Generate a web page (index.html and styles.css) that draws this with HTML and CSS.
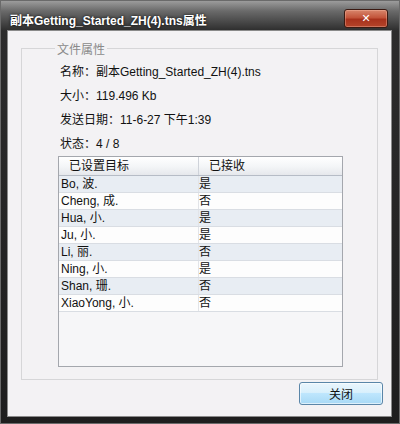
FILE: index.html
```html
<!DOCTYPE html>
<html lang="zh">
<head>
<meta charset="UTF-8">
<title>文件属性</title>
<link rel="stylesheet" href="styles.css">
</head>
<body>
<div class="window">
    <div class="titlebar">
        <span class="title">副本Getting_Started_ZH(4).tns属性</span>
        <button class="close-x">✕</button>
    </div>
    <div class="panel">
        <fieldset class="group">
            <legend>文件属性</legend>
            <div class="info">
                <div class="line">名称：副本Getting_Started_ZH(4).tns</div>
                <div class="line">大小：119.496 Kb</div>
                <div class="line">发送日期：11-6-27 下午1:39</div>
                <div class="line">状态：4 / 8</div>
            </div>
            <div class="table">
                <div class="head">
                    <div class="hcell first">已设置目标</div>
                    <div class="hcell">已接收</div>
                </div>
                <div class="row odd"><span class="name">Bo, 波.</span><span>是</span></div>
                <div class="row"><span class="name">Cheng, 成.</span><span>否</span></div>
                <div class="row odd"><span class="name">Hua, 小.</span><span>是</span></div>
                <div class="row"><span class="name">Ju, 小.</span><span>是</span></div>
                <div class="row odd"><span class="name">Li, 丽.</span><span>否</span></div>
                <div class="row"><span class="name">Ning, 小.</span><span>是</span></div>
                <div class="row odd"><span class="name">Shan, 珊.</span><span>否</span></div>
                <div class="row"><span class="name">XiaoYong, 小.</span><span>否</span></div>
            </div>
        </fieldset>
        <div class="actions">
            <button class="btn">关闭</button>
        </div>
    </div>
</div>
</body>
</html>
```
FILE: styles.css
```css
html, body {
    margin: 0;
    padding: 0;
}
body {
    width: 400px;
    height: 424px;
    font-family: "Liberation Sans", "Noto Sans CJK SC", sans-serif;
    font-size: 12px;
    color: #111;
}
.window {
    width: 400px;
    height: 424px;
    box-sizing: border-box;
    display: flex;
    flex-direction: column;
    background: linear-gradient(to bottom, #9c9c9c 0px, #6a6a6a 10px, #2c2c2c 30px, #1e1e1e 100%);
    border: 1px solid #6a6a6a;
}
.titlebar {
    height: 29px;
    display: flex;
    align-items: center;
    justify-content: space-between;
    padding: 0 11px 0 9px;
}
.title {
    color: #fff;
    font-size: 12px;
    font-weight: bold;
    margin-top: 8px;
    text-shadow: 0 0 3px #000;
}
.close-x {
    width: 44px;
    height: 19px;
    margin-top: 5px;
    border: 1px solid #3a1a12;
    border-radius: 3px;
    background: linear-gradient(to bottom, #d8866c 0%, #c2543a 45%, #a8321c 55%, #b4442a 100%);
    color: #fff;
    font-size: 11px;
    font-weight: bold;
    font-family: "DejaVu Sans", sans-serif;
    padding: 0;
    line-height: 17px;
    box-shadow: inset 0 0 0 1px rgba(255,200,180,0.35);
}
.panel {
    flex: 1;
    margin: 0 7px 6px 6px;
    background: #f3f2f4;
    border: 1px solid #8a8a8a;
    display: flex;
    flex-direction: column;
    padding: 9px 8px 11px 13px;
}
.group {
    margin: 0 5px 0 0;
    padding: 8px 34px 12px 36px;
    border: 1px solid #d6d6d8;
    height: 340px;
    box-sizing: border-box;
}
.group legend {
    color: #8a8a8a;
    padding: 0 2px;
    margin-left: -3px;
    font-size: 12px;
}
.info {
    display: flex;
    flex-direction: column;
    gap: 9px;
    padding-left: 2px;
}
.line {
    height: 15px;
    line-height: 15px;
}
.table {
    margin-top: 4px;
    height: 211px;
    box-sizing: border-box;
    border: 1px solid #a4a7ad;
    background: #f6f6f8;
}
.head {
    display: flex;
    height: 18px;
    background: linear-gradient(to bottom, #ffffff 0%, #f4f6f8 50%, #e6e8ec 100%);
    border-bottom: 1px solid #b6bcc6;
}
.hcell {
    line-height: 18px;
    padding-left: 10px;
    flex: 1;
}
.hcell.first {
    flex: 0 0 129px;
    border-right: 1px solid #cfd3da;
}
.row {
    display: flex;
    height: 16px;
    line-height: 16px;
    border-bottom: 1px solid #d9dde3;
    background: #fdfdfd;
}
.row.odd {
    background: #e8edf3;
}
.row .name {
    flex: 0 0 137px;
    padding-left: 2px;
    border-right: 1px solid #e2e4e8;
}
.actions {
    display: flex;
    justify-content: flex-end;
    margin-top: auto;
}
.btn {
    width: 84px;
    height: 23px;
    font-family: "Liberation Sans", "Noto Sans CJK SC", sans-serif;
    font-size: 12px;
    color: #111;
    border: 1px solid #5a86a8;
    border-radius: 3px;
    background: linear-gradient(to bottom, #eaf6fd 0%, #d9f0fc 45%, #bee6fd 50%, #a7d9f5 100%);
    box-shadow: inset 0 0 0 1px rgba(255,255,255,0.6);
    padding: 0;
}
```
